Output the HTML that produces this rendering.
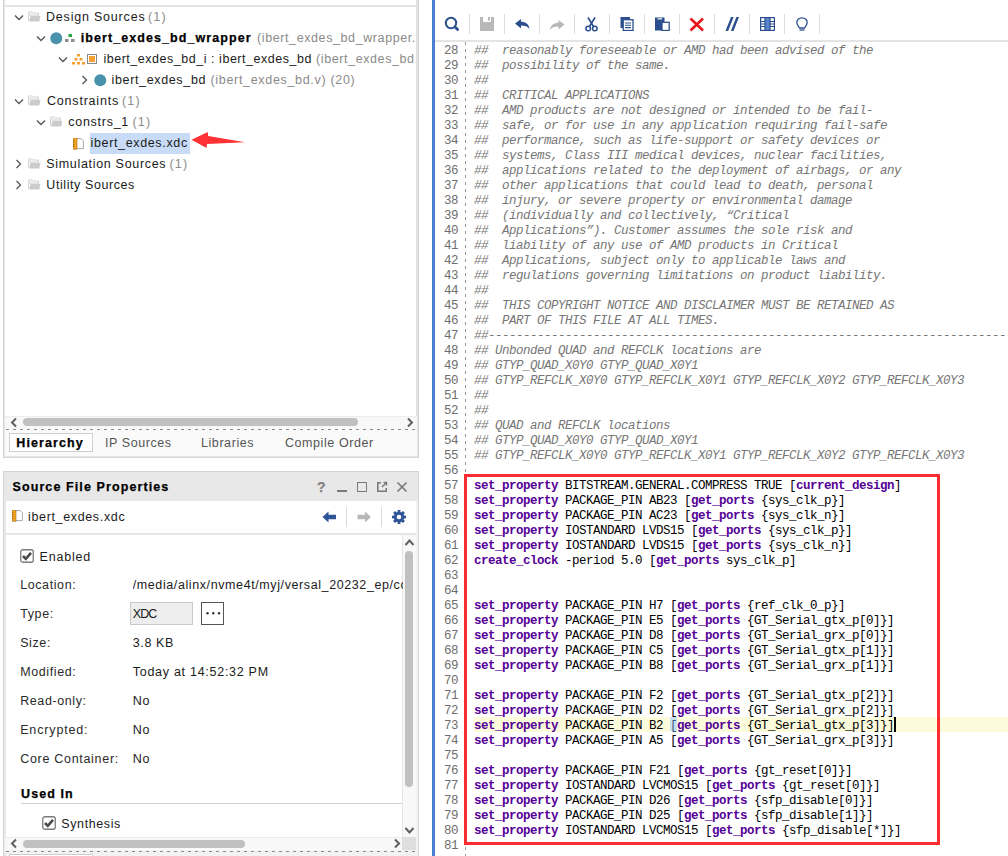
<!DOCTYPE html>
<html><head><meta charset="utf-8">
<style>
*{margin:0;padding:0;box-sizing:border-box}
html,body{width:1008px;height:856px;overflow:hidden;background:#fff;position:relative}
body{font-family:"Liberation Sans",sans-serif;font-size:12.5px;color:#1b1b1b}
.a{position:absolute;display:block}
.t{position:absolute;white-space:pre;line-height:16px;height:16px}
.ln{position:absolute;left:436px;width:22px;text-align:right;font-family:"Liberation Mono",monospace;font-size:12.5px;letter-spacing:-0.5px;color:#6e6e6e;line-height:15px;white-space:pre}
.cd{position:absolute;left:474px;font-family:"Liberation Mono",monospace;font-size:12.5px;letter-spacing:-0.5px;color:#000;line-height:15px;white-space:pre}
.cm{color:#767676;font-style:italic}
.kw{color:#550096;font-weight:bold}
</style></head>
<body>
<div class="a" style="left:3px;top:0px;width:416px;height:458px;background:#f2f2f2;border:1px solid #d4d4d4;border-top:none"></div>
<div class="a" style="left:4px;top:0px;width:414px;height:457px;background:#fafafa;border:1px solid #e6e6e6;border-top:none"></div>
<div class="a" style="left:5px;top:0px;width:411px;height:430px;background:#fff"></div>
<div class="a" style="left:416px;top:0px;width:2px;height:430px;background:#e2e2e2"></div>
<div class="a" style="left:5px;top:5px;width:412px;height:2px;background:#e4e4e4"></div>
<svg class="a" style="left:13.5px;top:13.5px" width="10" height="7" viewBox="0 0 10 7"><path d="M1 1.5 L5 5.5 L9 1.5" fill="none" stroke="#555" stroke-width="1.3"/></svg>
<svg class="a" style="left:28px;top:11px" width="13" height="11" viewBox="0 0 13 11"><path d="M0.5 9.5 V1 H4.5 L5.5 2 H10.5 V5" fill="none" stroke="#d0d0d0" stroke-width="1"/><path d="M0.5 2.5 H10 V5 H0.5z" fill="#e6e6e6"/><path d="M2.5 5 H12.5 L11.2 10.5 H1 z" fill="#cbcbcb"/></svg>
<div class="t" style="left:46.00px;top:9.17px;font-size:12.50px;letter-spacing:0.80px;color:#1b1b1b;">Design Sources</div>
<div class="t" style="left:148.00px;top:9.17px;font-size:12.50px;letter-spacing:1.20px;color:#8a8a8a;">(1)</div>
<svg class="a" style="left:36px;top:34.5px" width="10" height="7" viewBox="0 0 10 7"><path d="M1 1.5 L5 5.5 L9 1.5" fill="none" stroke="#555" stroke-width="1.3"/></svg>
<svg class="a" style="left:50px;top:32px" width="13" height="13" viewBox="0 0 13 13"><circle cx="6.25" cy="6.25" r="6" fill="#4a92ab"/></svg>
<svg class="a" style="left:65px;top:34px" width="10" height="9" viewBox="0 0 10 9"><rect x="3.5" y="0" width="3.5" height="3" fill="#27a844"/><rect x="0" y="5" width="3.5" height="3" fill="#8c8c8c"/><rect x="6" y="5" width="3.5" height="3" fill="#8c8c8c"/></svg>
<div class="t" style="left:80.70px;top:30.17px;font-size:12.50px;letter-spacing:1.08px;color:#000;font-weight:bold;-webkit-text-stroke:0.25px currentColor;">ibert_exdes_bd_wrapper</div>
<div class="t" style="left:257.00px;top:30.17px;font-size:12.50px;letter-spacing:0.60px;color:#8a8a8a;clip-path:inset(-5px 0 -5px 0);width:159px;overflow:hidden">(ibert_exdes_bd_wrapper.v) (1)</div>
<svg class="a" style="left:58px;top:55.5px" width="10" height="7" viewBox="0 0 10 7"><path d="M1 1.5 L5 5.5 L9 1.5" fill="none" stroke="#555" stroke-width="1.3"/></svg>
<svg class="a" style="left:72px;top:54px" width="13" height="11" viewBox="0 0 13 11"><g fill="#f5a030"><rect x="5" y="0" width="3" height="2.5"/><rect x="2.5" y="4" width="3" height="2.5"/><rect x="7.5" y="4" width="3" height="2.5"/><rect x="0" y="8" width="3" height="2.5"/><rect x="5" y="8" width="3" height="2.5"/><rect x="10" y="8" width="3" height="2.5"/></g></svg>
<svg class="a" style="left:87px;top:54px" width="10" height="10" viewBox="0 0 10 10"><rect x="0.5" y="0.5" width="9" height="9" fill="#fff" stroke="#8a8a8a"/><rect x="2" y="2" width="6" height="6" fill="#f5a030"/></svg>
<div class="t" style="left:103.40px;top:51.17px;font-size:12.50px;letter-spacing:0.53px;color:#1b1b1b;">ibert_exdes_bd_i : ibert_exdes_bd</div>
<div class="t" style="left:316.00px;top:51.17px;font-size:12.50px;letter-spacing:0.60px;color:#8a8a8a;width:100px;overflow:hidden">(ibert_exdes_bd.v) (20)</div>
<svg class="a" style="left:80.5px;top:75px" width="7" height="10" viewBox="0 0 7 10"><path d="M1.5 1 L5.5 5 L1.5 9" fill="none" stroke="#555" stroke-width="1.3"/></svg>
<svg class="a" style="left:94px;top:74px" width="13" height="13" viewBox="0 0 13 13"><circle cx="6.25" cy="6.25" r="6" fill="#4a92ab"/></svg>
<div class="t" style="left:111.50px;top:72.17px;font-size:12.50px;letter-spacing:0.65px;color:#1b1b1b;">ibert_exdes_bd</div>
<div class="t" style="left:210.50px;top:72.17px;font-size:12.50px;letter-spacing:0.68px;color:#8a8a8a;">(ibert_exdes_bd.v) (20)</div>
<svg class="a" style="left:13.5px;top:97.5px" width="10" height="7" viewBox="0 0 10 7"><path d="M1 1.5 L5 5.5 L9 1.5" fill="none" stroke="#555" stroke-width="1.3"/></svg>
<svg class="a" style="left:28px;top:95px" width="13" height="11" viewBox="0 0 13 11"><path d="M0.5 9.5 V1 H4.5 L5.5 2 H10.5 V5" fill="none" stroke="#d0d0d0" stroke-width="1"/><path d="M0.5 2.5 H10 V5 H0.5z" fill="#e6e6e6"/><path d="M2.5 5 H12.5 L11.2 10.5 H1 z" fill="#cbcbcb"/></svg>
<div class="t" style="left:47.00px;top:93.17px;font-size:12.50px;letter-spacing:0.80px;color:#1b1b1b;">Constraints</div>
<div class="t" style="left:122.00px;top:93.17px;font-size:12.50px;letter-spacing:1.20px;color:#8a8a8a;">(1)</div>
<svg class="a" style="left:36px;top:118.5px" width="10" height="7" viewBox="0 0 10 7"><path d="M1 1.5 L5 5.5 L9 1.5" fill="none" stroke="#555" stroke-width="1.3"/></svg>
<svg class="a" style="left:50px;top:116px" width="13" height="11" viewBox="0 0 13 11"><path d="M0.5 9.5 V1 H4.5 L5.5 2 H10.5 V5" fill="none" stroke="#d0d0d0" stroke-width="1"/><path d="M0.5 2.5 H10 V5 H0.5z" fill="#e6e6e6"/><path d="M2.5 5 H12.5 L11.2 10.5 H1 z" fill="#cbcbcb"/></svg>
<div class="t" style="left:68.30px;top:114.17px;font-size:12.50px;letter-spacing:0.72px;color:#1b1b1b;">constrs_1</div>
<div class="t" style="left:132.50px;top:114.17px;font-size:12.50px;letter-spacing:1.20px;color:#8a8a8a;">(1)</div>
<svg class="a" style="left:72.7px;top:137.5px" width="11" height="12" viewBox="0 0 11 12"><path d="M4 0.6 H8.3 L10.4 2.7 V10.6 H4" fill="#fff" stroke="#a8a8a8" stroke-width="1"/><rect x="0" y="0" width="4" height="11.2" fill="#f5a623"/><rect x="0" y="0" width="4" height="11.2" fill="none" stroke="#9a6a20" stroke-width="0.6"/><path d="M0 2.5h1.6M0 4.5h1.6M0 6.5h1.6M0 8.5h1.6" stroke="#8a5a10" stroke-width="0.7"/></svg>
<div class="a" style="left:90px;top:133px;width:100px;height:21px;background:#c8dcf8"></div>
<div class="t" style="left:90.50px;top:135.17px;font-size:12.50px;letter-spacing:0.65px;color:#1b1b1b;">ibert_exdes.xdc</div>
<svg class="a" style="left:188px;top:128px" width="60" height="24" viewBox="0 0 60 24"><polygon points="3.5,11.7 19.8,4.1 20.2,8.1 57,14.3 19,16 18.6,20" fill="#fe3234"/></svg>
<svg class="a" style="left:15.0px;top:159px" width="7" height="10" viewBox="0 0 7 10"><path d="M1.5 1 L5.5 5 L1.5 9" fill="none" stroke="#555" stroke-width="1.3"/></svg>
<svg class="a" style="left:28px;top:158px" width="13" height="11" viewBox="0 0 13 11"><path d="M0.5 9.5 V1 H4.5 L5.5 2 H10.5 V5" fill="none" stroke="#d0d0d0" stroke-width="1"/><path d="M0.5 2.5 H10 V5 H0.5z" fill="#e6e6e6"/><path d="M2.5 5 H12.5 L11.2 10.5 H1 z" fill="#cbcbcb"/></svg>
<div class="t" style="left:46.30px;top:156.17px;font-size:12.50px;letter-spacing:0.68px;color:#1b1b1b;">Simulation Sources</div>
<div class="t" style="left:169.50px;top:156.17px;font-size:12.50px;letter-spacing:1.20px;color:#8a8a8a;">(1)</div>
<svg class="a" style="left:15.0px;top:180px" width="7" height="10" viewBox="0 0 7 10"><path d="M1.5 1 L5.5 5 L1.5 9" fill="none" stroke="#555" stroke-width="1.3"/></svg>
<svg class="a" style="left:28px;top:179px" width="13" height="11" viewBox="0 0 13 11"><path d="M0.5 9.5 V1 H4.5 L5.5 2 H10.5 V5" fill="none" stroke="#d0d0d0" stroke-width="1"/><path d="M0.5 2.5 H10 V5 H0.5z" fill="#e6e6e6"/><path d="M2.5 5 H12.5 L11.2 10.5 H1 z" fill="#cbcbcb"/></svg>
<div class="t" style="left:46.30px;top:177.17px;font-size:12.50px;letter-spacing:0.58px;color:#1b1b1b;">Utility Sources</div>
<div class="a" style="left:5px;top:416px;width:412px;height:13px;background:#f8f8f8;border-top:1px solid #ececec"></div>
<svg class="a" style="left:10px;top:417px" width="8" height="11" viewBox="0 0 8 11"><path d="M6 1.5 L2 5.5 L6 9.5" fill="none" stroke="#5f5f5f" stroke-width="2"/></svg>
<div class="a" style="left:23px;top:418px;width:335px;height:8px;background:#c0c0c0;border-radius:4px"></div>
<svg class="a" style="left:406px;top:417px" width="8" height="11" viewBox="0 0 8 11"><path d="M2 1.5 L6 5.5 L2 9.5" fill="none" stroke="#5f5f5f" stroke-width="2"/></svg>
<div class="a" style="left:6px;top:429px;width:411px;height:1px;background:repeating-linear-gradient(90deg,#8c8c8c 0 3px,transparent 3px 7px)"></div>
<div class="a" style="left:9px;top:433px;width:84px;height:19px;background:#fff;border:1px solid #cfcfcf"></div>
<div class="t" style="left:16.30px;top:434.67px;font-size:12.50px;letter-spacing:1.10px;color:#000;font-weight:bold;-webkit-text-stroke:0.25px currentColor;">Hierarchy</div>
<div class="t" style="left:105.00px;top:434.97px;font-size:12.50px;letter-spacing:0.56px;color:#555;">IP Sources</div>
<div class="t" style="left:201.00px;top:434.97px;font-size:12.50px;letter-spacing:0.57px;color:#555;">Libraries</div>
<div class="t" style="left:285.00px;top:434.97px;font-size:12.50px;letter-spacing:0.57px;color:#555;">Compile Order</div>
<div class="a" style="left:3px;top:471px;width:416px;height:385px;background:#f2f2f2;border:1px solid #d4d4d4;border-bottom:none"></div>
<div class="a" style="left:4px;top:472px;width:414px;height:29px;background:#e8e8e8"></div>
<div class="t" style="left:12.50px;top:478.67px;font-size:12.50px;letter-spacing:1.10px;color:#000;font-weight:bold;-webkit-text-stroke:0.25px currentColor;">Source File Properties</div>
<div class="t" style="left:317.00px;top:479.15px;font-size:14.00px;letter-spacing:0.00px;color:#808080;font-weight:bold;-webkit-text-stroke:0.25px currentColor;">?</div>
<div class="a" style="left:337px;top:490px;width:10px;height:2px;background:#7a7a7a"></div>
<div class="a" style="left:357px;top:482px;width:10px;height:10px;border:1.6px solid #7a7a7a"></div>
<svg class="a" style="left:376px;top:481px" width="12" height="12" viewBox="0 0 12 12"><path d="M5 1.8 H1.8 V10.2 H10.2 V7" fill="none" stroke="#7a7a7a" stroke-width="1.6"/><path d="M6 6 L10.5 1.5 M7.5 1.5 H10.5 V4.5" fill="none" stroke="#7a7a7a" stroke-width="1.4"/></svg>
<svg class="a" style="left:396px;top:481px" width="12" height="12" viewBox="0 0 12 12"><path d="M1.5 1.5 L10.5 10.5 M10.5 1.5 L1.5 10.5" stroke="#7a7a7a" stroke-width="1.7"/></svg>
<div class="a" style="left:4px;top:501px;width:2px;height:355px;background:#e9e9e9"></div>
<div class="a" style="left:6px;top:501px;width:410px;height:32px;background:#fff"></div>
<div class="a" style="left:5px;top:533px;width:411px;height:2px;background:#e6e6e6"></div>
<svg class="a" style="left:11.5px;top:510px" width="11" height="12" viewBox="0 0 11 12"><path d="M4 0.6 H8.3 L10.4 2.7 V10.6 H4" fill="#fff" stroke="#a8a8a8" stroke-width="1"/><rect x="0" y="0" width="4" height="11.2" fill="#f5a623"/><rect x="0" y="0" width="4" height="11.2" fill="none" stroke="#9a6a20" stroke-width="0.6"/><path d="M0 2.5h1.6M0 4.5h1.6M0 6.5h1.6M0 8.5h1.6" stroke="#8a5a10" stroke-width="0.7"/></svg>
<div class="t" style="left:28.00px;top:508.67px;font-size:12.50px;letter-spacing:0.65px;color:#1b1b1b;">ibert_exdes.xdc</div>
<svg class="a" style="left:322px;top:511px" width="15" height="12" viewBox="0 0 15 12"><path d="M0.5 6 L6.5 0.5 V3.8 H14 V8.2 H6.5 V11.5 Z" fill="#2f5597"/></svg>
<div class="a" style="left:346px;top:507px;width:1px;height:20px;background:#dcdcdc"></div>
<svg class="a" style="left:357px;top:511px" width="15" height="12" viewBox="0 0 15 12"><path d="M14 6 L8 0.5 V3.8 H0.5 V8.2 H8 V11.5 Z" fill="#b8b8b8"/></svg>
<div class="a" style="left:381px;top:507px;width:1px;height:20px;background:#dcdcdc"></div>
<svg class="a" style="left:391px;top:509px" width="16" height="16" viewBox="0 0 16 16"><g fill="#2f5597"><circle cx="8" cy="8" r="5.2"/><rect x="6.6" y="1" width="2.8" height="3.5" transform="rotate(0 8 8)"/><rect x="6.6" y="1" width="2.8" height="3.5" transform="rotate(45 8 8)"/><rect x="6.6" y="1" width="2.8" height="3.5" transform="rotate(90 8 8)"/><rect x="6.6" y="1" width="2.8" height="3.5" transform="rotate(135 8 8)"/><rect x="6.6" y="1" width="2.8" height="3.5" transform="rotate(180 8 8)"/><rect x="6.6" y="1" width="2.8" height="3.5" transform="rotate(225 8 8)"/><rect x="6.6" y="1" width="2.8" height="3.5" transform="rotate(270 8 8)"/><rect x="6.6" y="1" width="2.8" height="3.5" transform="rotate(315 8 8)"/></g><circle cx="8" cy="8" r="2.3" fill="#fff"/></svg>
<div class="a" style="left:6px;top:535px;width:396px;height:302px;background:#fff"></div>
<div class="a" style="left:402px;top:535px;width:14px;height:302px;background:#f8f8f8;border-left:1px solid #e6e6e6"></div>
<svg class="a" style="left:404px;top:538px" width="11" height="9" viewBox="0 0 11 9"><path d="M1.5 7 L5.5 2.5 L9.5 7" fill="none" stroke="#5f5f5f" stroke-width="2"/></svg>
<div class="a" style="left:405px;top:551px;width:8px;height:236px;background:#c0c0c0;border-radius:4px"></div>
<svg class="a" style="left:404px;top:826px" width="11" height="9" viewBox="0 0 11 9"><path d="M1.5 2 L5.5 6.5 L9.5 2" fill="none" stroke="#5f5f5f" stroke-width="2"/></svg>
<div class="a" style="left:5px;top:837px;width:397px;height:13px;background:#f8f8f8;border-top:1px solid #ececec"></div>
<svg class="a" style="left:10px;top:838px" width="8" height="11" viewBox="0 0 8 11"><path d="M6 1.5 L2 5.5 L6 9.5" fill="none" stroke="#5f5f5f" stroke-width="2"/></svg>
<div class="a" style="left:23px;top:840px;width:222px;height:8px;background:#c0c0c0;border-radius:4px"></div>
<svg class="a" style="left:393px;top:838px" width="8" height="11" viewBox="0 0 8 11"><path d="M2 1.5 L6 5.5 L2 9.5" fill="none" stroke="#5f5f5f" stroke-width="2"/></svg>
<div class="a" style="left:402px;top:837px;width:14px;height:13px;background:#dedede"></div>
<div class="a" style="left:6px;top:851px;width:411px;height:1px;background:repeating-linear-gradient(90deg,#8c8c8c 0 3px,transparent 3px 7px)"></div>
<div class="a" style="left:9px;top:854px;width:84px;height:4px;background:#fff;border:1px solid #cfcfcf"></div>
<svg class="a" style="left:20px;top:549px" width="14" height="14" viewBox="0 0 14 14"><rect x="0.75" y="0.75" width="12.5" height="12.5" rx="2" fill="#fff" stroke="#7a7a7a" stroke-width="1.3"/><path d="M3 7 L5.8 9.8 L11 3.8" fill="none" stroke="#4a4a4a" stroke-width="2.6"/></svg>
<div class="t" style="left:39.60px;top:549.47px;font-size:12.50px;letter-spacing:0.79px;color:#1b1b1b;">Enabled</div>
<div class="t" style="left:20.20px;top:576.67px;font-size:12.50px;letter-spacing:0.59px;color:#2a2a2a;">Location:</div>
<div class="t" style="left:20.20px;top:605.67px;font-size:12.50px;letter-spacing:0.60px;color:#2a2a2a;">Type:</div>
<div class="t" style="left:20.20px;top:634.67px;font-size:12.50px;letter-spacing:0.60px;color:#2a2a2a;">Size:</div>
<div class="t" style="left:20.20px;top:663.67px;font-size:12.50px;letter-spacing:0.60px;color:#2a2a2a;">Modified:</div>
<div class="t" style="left:20.20px;top:692.67px;font-size:12.50px;letter-spacing:0.60px;color:#2a2a2a;">Read-only:</div>
<div class="t" style="left:20.20px;top:721.67px;font-size:12.50px;letter-spacing:0.85px;color:#2a2a2a;">Encrypted:</div>
<div class="t" style="left:20.20px;top:750.67px;font-size:12.50px;letter-spacing:0.70px;color:#2a2a2a;">Core Container:</div>
<div class="t" style="left:132.70px;top:576.67px;font-size:12.50px;letter-spacing:0.60px;color:#1b1b1b;width:270px;overflow:hidden">/media/alinx/nvme4t/myj/versal_20232_ep/constrs</div>
<div class="a" style="left:130px;top:602px;width:63px;height:23px;background:#ededed;border:1px solid #c9c9c9"></div>
<div class="t" style="left:132.80px;top:605.67px;font-size:12.50px;letter-spacing:-0.90px;color:#1b1b1b;">XDC</div>
<div class="a" style="left:201px;top:602px;width:23px;height:23px;background:#fff;border:1px solid #555"></div>
<svg class="a" style="left:201px;top:602px" width="23" height="23" viewBox="0 0 23 23"><circle cx="6.5" cy="11.2" r="1.2" fill="#333"/><circle cx="12.2" cy="11.2" r="1.2" fill="#333"/><circle cx="18" cy="11.2" r="1.2" fill="#333"/></svg>
<div class="t" style="left:132.80px;top:634.87px;font-size:12.50px;letter-spacing:0.60px;color:#1b1b1b;">3.8 KB</div>
<div class="t" style="left:132.80px;top:663.87px;font-size:12.50px;letter-spacing:0.72px;color:#1b1b1b;">Today at 14:52:32 PM</div>
<div class="t" style="left:132.80px;top:692.67px;font-size:12.50px;letter-spacing:0.60px;color:#1b1b1b;">No</div>
<div class="t" style="left:132.80px;top:721.67px;font-size:12.50px;letter-spacing:0.60px;color:#1b1b1b;">No</div>
<div class="t" style="left:132.80px;top:750.67px;font-size:12.50px;letter-spacing:0.60px;color:#1b1b1b;">No</div>
<div class="t" style="left:21.00px;top:785.67px;font-size:12.50px;letter-spacing:1.10px;color:#000;font-weight:bold;-webkit-text-stroke:0.25px currentColor;">Used In</div>
<div class="a" style="left:21px;top:803px;width:381px;height:1px;background:#d0d0d0"></div>
<svg class="a" style="left:42px;top:816px" width="14" height="14" viewBox="0 0 14 14"><rect x="0.75" y="0.75" width="12.5" height="12.5" rx="2" fill="#fff" stroke="#7a7a7a" stroke-width="1.3"/><path d="M3 7 L5.8 9.8 L11 3.8" fill="none" stroke="#4a4a4a" stroke-width="2.6"/></svg>
<div class="t" style="left:61.30px;top:816.37px;font-size:12.50px;letter-spacing:0.60px;color:#1b1b1b;">Synthesis</div>
<div class="a" style="left:432px;top:0px;width:3px;height:856px;background:#4a7fd1"></div>
<div class="a" style="left:435px;top:40px;width:573px;height:2px;background:#e4e4e4"></div>
<div class="a" style="left:469px;top:14px;width:1px;height:20px;background:#dcdcdc"></div>
<div class="a" style="left:504px;top:14px;width:1px;height:20px;background:#dcdcdc"></div>
<div class="a" style="left:539px;top:14px;width:1px;height:20px;background:#dcdcdc"></div>
<div class="a" style="left:574px;top:14px;width:1px;height:20px;background:#dcdcdc"></div>
<div class="a" style="left:609px;top:14px;width:1px;height:20px;background:#dcdcdc"></div>
<div class="a" style="left:644px;top:14px;width:1px;height:20px;background:#dcdcdc"></div>
<div class="a" style="left:679px;top:14px;width:1px;height:20px;background:#dcdcdc"></div>
<div class="a" style="left:714px;top:14px;width:1px;height:20px;background:#dcdcdc"></div>
<div class="a" style="left:749px;top:14px;width:1px;height:20px;background:#dcdcdc"></div>
<div class="a" style="left:784px;top:14px;width:1px;height:20px;background:#dcdcdc"></div>
<div class="a" style="left:819px;top:14px;width:1px;height:20px;background:#dcdcdc"></div>
<svg class="a" style="left:444px;top:16px" width="16" height="16" viewBox="0 0 16 16"><circle cx="7" cy="7" r="5.2" fill="none" stroke="#2b4f8e" stroke-width="2"/><path d="M11.6 11.6 L13.6 13.6" stroke="#2b4f8e" stroke-width="2.8" stroke-linecap="round"/></svg>
<svg class="a" style="left:480px;top:17px" width="14" height="14" viewBox="0 0 14 14"><path d="M0 0 H3 V5 H11 V0 H14 V14 H0Z" fill="#b8b8b8"/><rect x="8" y="0" width="2" height="3.5" fill="#b8b8b8"/></svg>
<svg class="a" style="left:515px;top:19px" width="15" height="10" viewBox="0 0 15 10"><path d="M0 4.5 L6 0 V2.8 C10.5 2.8 14 5 14.5 10 C12.5 7.2 10 6.5 6 6.5 V9.5 Z" fill="#2b4f8e"/></svg>
<svg class="a" style="left:549.5px;top:19.5px" width="15" height="10" viewBox="0 0 15 10"><path d="M14.5 4.5 L8.5 0 V2.8 C4 2.8 0.5 5 0 10 C2 7.2 4.5 6.5 8.5 6.5 V9.5 Z" fill="#b8b8b8"/></svg>
<svg class="a" style="left:585px;top:17px" width="13" height="15" viewBox="0 0 13 15"><path d="M3 0.5 L8.5 9.5 M10 0.5 L4.5 9.5" stroke="#2b4f8e" stroke-width="1.6"/><circle cx="3.2" cy="11.5" r="2.3" fill="none" stroke="#2b4f8e" stroke-width="1.5"/><circle cx="9.8" cy="11.5" r="2.3" fill="none" stroke="#2b4f8e" stroke-width="1.5"/></svg>
<svg class="a" style="left:620px;top:17px" width="14" height="14" viewBox="0 0 14 14"><rect x="0.5" y="0" width="9.5" height="11" fill="#2b4f8e"/><rect x="3.2" y="2.7" width="9.8" height="10.8" fill="#fff" stroke="#2b4f8e" stroke-width="1.3"/><path d="M5 6h6M5 8.3h6M5 10.6h6" stroke="#2b4f8e" stroke-width="1.1"/></svg>
<svg class="a" style="left:654.5px;top:17px" width="15" height="14" viewBox="0 0 15 14"><rect x="0" y="0.5" width="9.5" height="13" fill="#2b4f8e"/><rect x="2.5" y="1.3" width="4.5" height="1.2" fill="#fff"/><rect x="7" y="5.3" width="7.2" height="8.2" fill="#fff" stroke="#2b4f8e" stroke-width="1.3"/></svg>
<svg class="a" style="left:689px;top:17px" width="16" height="15" viewBox="0 0 16 15"><path d="M1.5 1.5 L14 13.5 M14 1.5 L1.5 13.5" stroke="#e8141c" stroke-width="2.6"/></svg>
<svg class="a" style="left:725px;top:17px" width="14" height="14" viewBox="0 0 14 14"><path d="M6 0 H8.6 L3.1 14 H0.5Z M11.4 0 H14 L8.5 14 H5.9Z" fill="#2b4f8e"/></svg>
<svg class="a" style="left:759.5px;top:17px" width="15" height="14" viewBox="0 0 15 14"><rect x="0.6" y="0.6" width="13.8" height="12.8" fill="#fff" stroke="#2b4f8e" stroke-width="1.2"/><rect x="5" y="1" width="5" height="12" fill="#5a84cc"/><path d="M5 1V13M10 1V13" stroke="#2b4f8e" stroke-width="1.2"/><path d="M1 4.5h4M1 7h4M1 9.5h4M10 4.5h4M10 7h4M10 9.5h4" stroke="#2b4f8e" stroke-width="1"/></svg>
<svg class="a" style="left:796px;top:17px" width="12" height="15" viewBox="0 0 12 15"><path d="M6 0.8 C2.8 0.8 0.8 3 0.8 5.6 C0.8 8 2.6 9 3.5 11 H8.5 C9.4 9 11.2 8 11.2 5.6 C11.2 3 9.2 0.8 6 0.8Z" fill="none" stroke="#2b4f8e" stroke-width="1.3"/><path d="M3.5 13 H8.5" stroke="#2b4f8e" stroke-width="1.3"/></svg>
<div class="a" style="left:474px;top:717px;width:534px;height:15px;background:#fcfcdc"></div>
<div class="a" style="left:670px;top:717px;width:7px;height:14px;background:#c9e1ee"></div>
<div class="a" style="left:465px;top:42px;width:1px;height:814px;background:repeating-linear-gradient(180deg,#9a9a9a 0 3px,transparent 3px 7px)"></div>
<div class="ln" style="top:44px">28
29
30
31
32
33
34
35
36
37
38
39
40
41
42
43
44
45
46
47
48
49
50
51
52
53
54
55
56
57
58
59
60
61
62
63
64
65
66
67
68
69
70
71
72
73
74
75
76
77
78
79
80
81</div>
<div class="cd" style="top:44px"><span class="cm">##  reasonably foreseeable or AMD had been advised of the</span>
<span class="cm">##  possibility of the same.</span>
<span class="cm">##</span>
<span class="cm">##  CRITICAL APPLICATIONS</span>
<span class="cm">##  AMD products are not designed or intended to be fail-</span>
<span class="cm">##  safe, or for use in any application requiring fail-safe</span>
<span class="cm">##  performance, such as life-support or safety devices or</span>
<span class="cm">##  systems, Class III medical devices, nuclear facilities,</span>
<span class="cm">##  applications related to the deployment of airbags, or any</span>
<span class="cm">##  other applications that could lead to death, personal</span>
<span class="cm">##  injury, or severe property or environmental damage</span>
<span class="cm">##  (individually and collectively, “Critical</span>
<span class="cm">##  Applications”). Customer assumes the sole risk and</span>
<span class="cm">##  liability of any use of AMD products in Critical</span>
<span class="cm">##  Applications, subject only to applicable laws and</span>
<span class="cm">##  regulations governing limitations on product liability.</span>
<span class="cm">##</span>
<span class="cm">##  THIS COPYRIGHT NOTICE AND DISCLAIMER MUST BE RETAINED AS</span>
<span class="cm">##  PART OF THIS FILE AT ALL TIMES.</span>
<span class="cm">##------------------------------------------------------------------------------</span>
<span class="cm">## Unbonded QUAD and REFCLK locations are</span>
<span class="cm">## GTYP_QUAD_X0Y0 GTYP_QUAD_X0Y1</span>
<span class="cm">## GTYP_REFCLK_X0Y0 GTYP_REFCLK_X0Y1 GTYP_REFCLK_X0Y2 GTYP_REFCLK_X0Y3</span>
<span class="cm">##</span>
<span class="cm">##</span>
<span class="cm">## QUAD and REFCLK locations</span>
<span class="cm">## GTYP_QUAD_X0Y0 GTYP_QUAD_X0Y1</span>
<span class="cm">## GTYP_REFCLK_X0Y0 GTYP_REFCLK_X0Y1 GTYP_REFCLK_X0Y2 GTYP_REFCLK_X0Y3</span>

<span class="kw">set_property</span> BITSTREAM.GENERAL.COMPRESS TRUE [<span class="kw">current_design</span>]
<span class="kw">set_property</span> PACKAGE_PIN AB23 [<span class="kw">get_ports</span> {sys_clk_p}]
<span class="kw">set_property</span> PACKAGE_PIN AC23 [<span class="kw">get_ports</span> {sys_clk_n}]
<span class="kw">set_property</span> IOSTANDARD LVDS15 [<span class="kw">get_ports</span> {sys_clk_p}]
<span class="kw">set_property</span> IOSTANDARD LVDS15 [<span class="kw">get_ports</span> {sys_clk_n}]
<span class="kw">create_clock</span> -period 5.0 [<span class="kw">get_ports</span> sys_clk_p]


<span class="kw">set_property</span> PACKAGE_PIN H7 [<span class="kw">get_ports</span> {ref_clk_0_p}]
<span class="kw">set_property</span> PACKAGE_PIN E5 [<span class="kw">get_ports</span> {GT_Serial_gtx_p[0]}]
<span class="kw">set_property</span> PACKAGE_PIN D8 [<span class="kw">get_ports</span> {GT_Serial_grx_p[0]}]
<span class="kw">set_property</span> PACKAGE_PIN C5 [<span class="kw">get_ports</span> {GT_Serial_gtx_p[1]}]
<span class="kw">set_property</span> PACKAGE_PIN B8 [<span class="kw">get_ports</span> {GT_Serial_grx_p[1]}]

<span class="kw">set_property</span> PACKAGE_PIN F2 [<span class="kw">get_ports</span> {GT_Serial_gtx_p[2]}]
<span class="kw">set_property</span> PACKAGE_PIN D2 [<span class="kw">get_ports</span> {GT_Serial_grx_p[2]}]
<span class="kw">set_property</span> PACKAGE_PIN B2 <span style="color:#3a5a80">[</span><span class="kw">get_ports</span> {GT_Serial_gtx_p[3]}]
<span class="kw">set_property</span> PACKAGE_PIN A5 [<span class="kw">get_ports</span> {GT_Serial_grx_p[3]}]

<span class="kw">set_property</span> PACKAGE_PIN F21 [<span class="kw">get_ports</span> {gt_reset[0]}]
<span class="kw">set_property</span> IOSTANDARD LVCMOS15 [<span class="kw">get_ports</span> {gt_reset[0]}]
<span class="kw">set_property</span> PACKAGE_PIN D26 [<span class="kw">get_ports</span> {sfp_disable[0]}]
<span class="kw">set_property</span> PACKAGE_PIN D25 [<span class="kw">get_ports</span> {sfp_disable[1]}]
<span class="kw">set_property</span> IOSTANDARD LVCMOS15 [<span class="kw">get_ports</span> {sfp_disable[*]}]
</div>
<div class="a" style="left:894px;top:717px;width:2px;height:15px;background:#000"></div>
<div class="a" style="left:464px;top:474px;width:476px;height:371px;border:3px solid #fd2c30"></div>
</body></html>
